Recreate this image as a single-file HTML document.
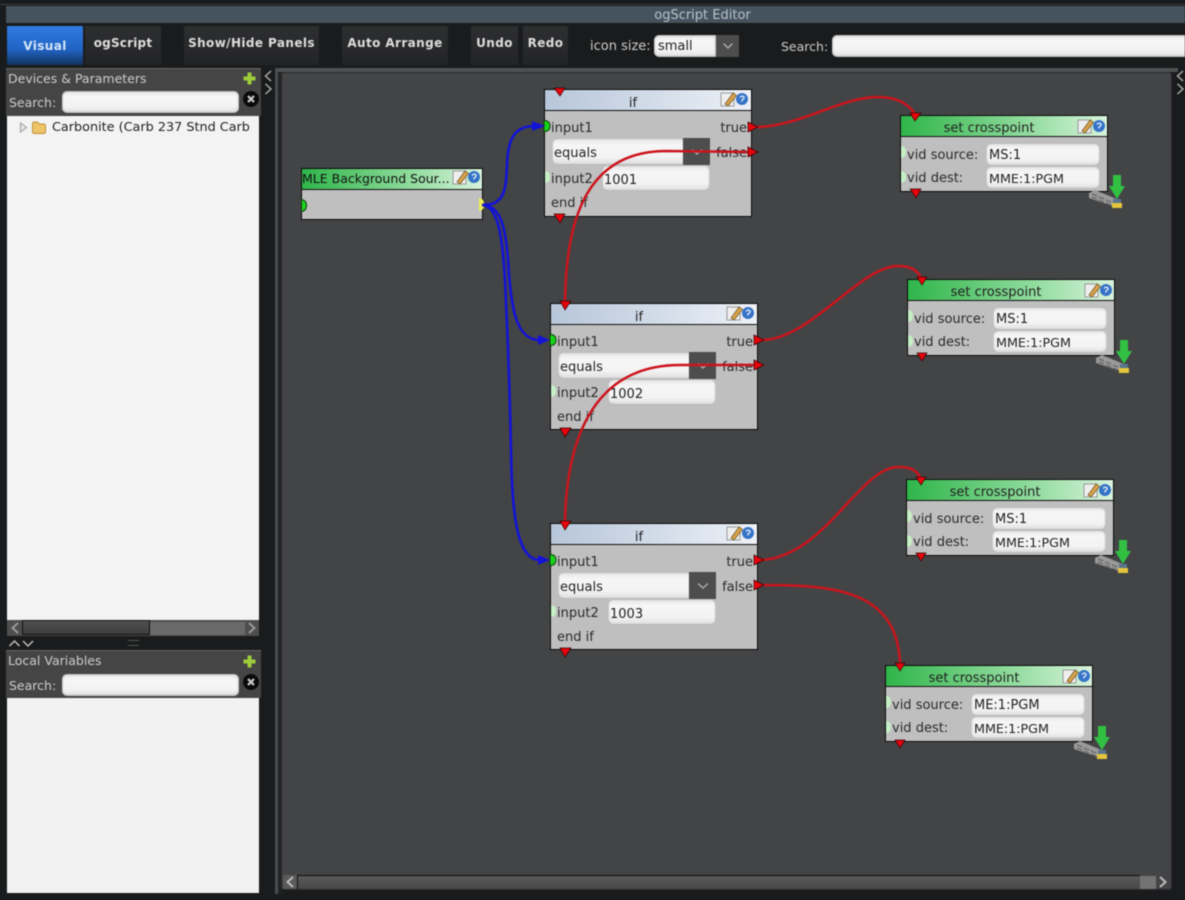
<!DOCTYPE html>
<html><head><meta charset="utf-8"><title>ogScript Editor</title>
<style>
html,body{margin:0;padding:0;background:#1a1b1c;}
#r{position:relative;width:1185px;height:900px;overflow:hidden;background:#1a1b1c;font-family:"DejaVu Sans","Liberation Sans",sans-serif;font-size:13px;color:#222;filter:blur(.45px);}
#r div,#r span{position:absolute;white-space:nowrap;box-sizing:border-box;}
.tb{top:26px;height:39px;background:linear-gradient(#2e2f30,#232425);color:#ddd;font-weight:bold;font-size:12px;text-align:center;line-height:34px;letter-spacing:.4px;}
.lb{color:#ccc;font-size:12.500px;}
.field{background:linear-gradient(#e4e4e4,#f6f6f6 25%,#f3f3f3 70%,#dedede);border-radius:5px;color:#222;line-height:26px;padding-left:2px;box-shadow:inset 0 0 2px #777;}
.node{border:1px solid #0a0a0a;background:#bfbfbf;width:208px;}
.hd{left:0;top:0;right:0;height:21px;border-bottom:1px solid #111;text-align:center;line-height:25px;color:#222;padding-right:30px;}
.if .hd{background:linear-gradient(90deg,#b7c6da,#dce4ee 70%,#eef1f6);line-height:27px;}
.set .hd{background:linear-gradient(90deg,#2fb54a,#8fdb9c 60%,#d8f3dc);}
.t{color:#2a2a2a;}
.led{width:5px;height:12px;background:#c5f0c5;border-radius:0 6px 6px 0;left:0;}
.ico{position:absolute;left:175px;top:1px;}
.set .ico{top:2px;}
.dl{position:absolute;}
.i1{left:6px;top:31px;}
.tr{right:4px;top:31px;}
.sel{left:7px;top:48px;width:132px;height:27px;border-radius:5px 0 0 5px;line-height:31px;padding-left:2px;}
.btn{left:138px;top:48px;width:27px;height:27px;background:#4d4d4d;}
.chev{position:absolute;left:145px;top:58px;}
.fa{right:4px;top:56px;}
.i2{left:6px;top:82px;}
.inp{left:57px;top:75px;width:108px;height:26px;line-height:31px;}
.en{left:6px;top:106px;}
.l1{top:30px;}.l2{top:55px;}
.s1{left:6px;top:32px;}.s2{left:6px;top:55px;}
.f1{left:85px;top:27px;width:114px;height:23px;padding-left:3px;}
.f2{left:85px;top:50px;width:114px;height:23px;padding-left:3px;font-size:12.700px;}
</style></head><body>
<svg width="0" height="0" style="position:absolute">
<defs>
<symbol id="pe" viewBox="0 0 30 18"><rect x="1" y="2" width="13" height="13" fill="#eee" stroke="#999"/><path d="M5 13L13 2L16.500 4.500L8 15Z" fill="#d6a24a" stroke="#6e5326" stroke-width=".7"/><circle cx="22" cy="8" r="6" fill="#3573c8"/><path d="M20 6.500Q22 4 24 6Q24.500 7.500 22 9V10.500" fill="none" stroke="#e8f0fa" stroke-width="1.300"/></symbol>
<symbol id="dn" viewBox="0 0 36 36"><path d="M0 19L6 16L30 26V34L0 24Z" fill="#9a9a9a"/><path d="M3 20L8 22M10 23L15 25M17 26L22 28M3 23L8 25M10 26L15 28M17 29L22 31" stroke="#6a6a6a" stroke-width="1.400"/><path d="M24 1H32V12H36L28 25L20 12H24Z" fill="#32c043"/><rect x="24" y="25" width="8" height="4" fill="#5a7590"/><rect x="23" y="29" width="10" height="5" fill="#e4c53c"/></symbol>
</defs></svg>
<div id="r">
<div style="left:0;top:4px;width:1185px;height:1px;background:#3c3f41"></div>
<div style="left:6px;top:6px;width:1179px;height:17px;background:#44535e;color:#b9c4cb;text-align:center;line-height:20px;font-size:13px;padding-left:214px;">ogScript Editor</div>

<div class="tb" style="left:7px;width:76px;background:linear-gradient(#2f7be0,#2064c4 60%,#12325f);color:#d6e6f8;line-height:40px;">Visual</div>
<div class="tb" style="left:85px;width:76px;letter-spacing:.2px;">ogScript</div>
<div class="tb" style="left:184px;width:135px;">Show/Hide Panels</div>
<div class="tb" style="left:342px;width:106px;">Auto Arrange</div>
<div class="tb" style="left:471px;width:47px;">Undo</div>
<div class="tb" style="left:523px;width:45px;">Redo</div>
<div class="lb" style="left:590px;top:39px;font-size:13px;">icon size:</div>
<div class="field" style="left:654px;top:35px;width:62px;height:22px;border-radius:5px 0 0 5px;padding-left:4px;line-height:24px;">small</div>
<div style="left:716px;top:35px;width:23px;height:22px;background:#4d4d4d;"></div>
<svg style="position:absolute;left:722px;top:42px" width="12" height="8"><path d="M1.500 1.500L6 6L10.500 1.500" fill="none" stroke="#aaa" stroke-width="1.500"/></svg>
<div class="lb" style="left:781px;top:39px;">Search:</div>
<div class="field" style="left:832px;top:35px;width:360px;height:22px;"></div>

<div style="left:6px;top:68px;width:255px;height:48px;background:#454545;border-top:1px solid #666;"></div>
<div class="lb" style="left:8px;top:71px;">Devices &amp; Parameters</div>
<svg style="position:absolute;left:243px;top:72px" width="13" height="13"><path d="M6.500 0.500V12.500M0.500 6.500H12.500" stroke="#9ecb3a" stroke-width="4"/></svg>
<div class="lb" style="left:9px;top:95px;">Search:</div>
<div class="field" style="left:62px;top:91px;width:177px;height:22px;"></div>
<svg style="position:absolute;left:243px;top:91px" width="16" height="16"><circle cx="8" cy="8" r="8" fill="#0a0a0a"/><path d="M5 5L11 11M11 5L5 11" stroke="#ccc" stroke-width="2.200"/></svg>
<div style="left:7px;top:116px;width:252px;height:504px;background:#f3f3f3;"></div>
<svg style="position:absolute;left:19px;top:122px" width="10" height="11"><path d="M1.500 1L7.500 5.500L1.500 10Z" fill="#e8e8e8" stroke="#999"/></svg>
<svg style="position:absolute;left:32px;top:121px" width="14" height="13"><path d="M0.500 3Q0.500 1 2.500 1H5.500L7 3H11.500Q13.500 3 13.500 5V10.500Q13.500 12.500 11.500 12.500H2.500Q0.500 12.500 0.500 10.500Z" fill="#eec467" stroke="#c2903a"/></svg>
<div style="left:52px;top:120px;color:#222;font-size:12.800px;">Carbonite (Carb 237 Stnd Carb</div>

<div style="left:7px;top:620px;width:252px;height:16px;background:#4e4e4e;"></div>
<div style="left:22px;top:620px;width:128px;height:15px;background:linear-gradient(#505050,#3d3d3d);border:1px solid #111;"></div>
<div style="left:150px;top:622px;width:95px;height:13px;background:#6a6a6a;"></div>
<svg style="position:absolute;left:10px;top:622px" width="10" height="12"><path d="M8 1L2.500 6L8 11" fill="none" stroke="#999" stroke-width="2"/></svg>
<svg style="position:absolute;left:247px;top:622px" width="10" height="12"><path d="M2 1L7.500 6L2 11" fill="none" stroke="#999" stroke-width="2"/></svg>
<svg style="position:absolute;left:8px;top:639px" width="26" height="9"><path d="M1.500 7L6.500 2L11.500 7M15 2L20 7L25 2" fill="none" stroke="#bbb" stroke-width="1.500"/></svg>
<div style="left:128px;top:640px;width:11px;height:6px;border-top:1px solid #555;border-bottom:1px solid #555;"></div>

<div style="left:6px;top:650px;width:255px;height:48px;background:#454545;border-top:1px solid #666;"></div>
<div class="lb" style="left:8px;top:653px;">Local Variables</div>
<svg style="position:absolute;left:243px;top:655px" width="13" height="13"><path d="M6.500 0.500V12.500M0.500 6.500H12.500" stroke="#9ecb3a" stroke-width="4"/></svg>
<div class="lb" style="left:9px;top:678px;">Search:</div>
<div class="field" style="left:62px;top:674px;width:177px;height:22px;"></div>
<svg style="position:absolute;left:243px;top:674px" width="16" height="16"><circle cx="8" cy="8" r="8" fill="#0a0a0a"/><path d="M5 5L11 11M11 5L5 11" stroke="#ccc" stroke-width="2.200"/></svg>
<div style="left:7px;top:698px;width:252px;height:195px;background:#f2f2f2;"></div>

<svg style="position:absolute;left:263px;top:69px" width="10" height="26"><path d="M8 2L2.500 7L8 12M2.500 15L8 20L2.500 25" fill="none" stroke="#aaa" stroke-width="1.500"/></svg>
<svg style="position:absolute;left:1175px;top:69px" width="10" height="26"><path d="M8 2L2.500 7L8 12M2.500 15L8 20L2.500 25" fill="none" stroke="#aaa" stroke-width="1.500"/></svg>

<div style="left:275px;top:68px;width:903px;height:4px;background:#505152;"></div>
<div style="left:275px;top:68px;width:3px;height:826px;background:#4a4b4c;"></div>
<div style="left:278px;top:72px;width:3px;height:822px;background:#232425;"></div>
<div style="left:281px;top:72px;width:891px;height:818px;background:#434446;border:1px solid #2a2a2a;border-radius:3px;"></div>

<div style="left:283px;top:875px;width:14px;height:14px;background:#5a5a5a;"></div>
<svg style="position:absolute;left:285px;top:876px" width="10" height="12"><path d="M8 1L2.500 6L8 11" fill="none" stroke="#bbb" stroke-width="2"/></svg>
<div style="left:297px;top:875px;width:843px;height:14px;background:linear-gradient(#595959,#484848);border-top:1px solid #0d0d0d;border-left:1px solid #111;"></div>
<div style="left:1140px;top:876px;width:16px;height:13px;background:#737373;"></div>
<svg style="position:absolute;left:1158px;top:876px" width="10" height="12"><path d="M2 1L7.500 6L2 11" fill="none" stroke="#bbb" stroke-width="2"/></svg>

<!-- MLE node -->
<div class="node set" style="left:301px;top:168px;width:182px;height:52px;">
  <div class="hd" style="text-align:left;padding:0;color:#111;line-height:20px;font-size:12.500px;">MLE Background Sour...</div>
  <svg class="ico" style="left:150px;top:0" width="30" height="18"><use href="#pe"/></svg>
  <div style="left:-1px;top:30px;width:6px;height:13px;background:#1fd41f;border:1px solid #0d420d;border-radius:0 7px 7px 0;"></div>
  <div style="right:-2px;top:29px;width:5px;height:13px;background:#efef55;border-radius:0 6px 6px 0;"></div>
</div>

<!-- if 1 -->
<div class="node if" style="left:544px;top:89px;height:128px;">
  <div class="hd">if</div>
  <svg class="ico" width="30" height="18"><use href="#pe"/></svg>
  <div class="t i1">input1</div>
  <div class="t tr">true</div>
  <div class="field sel">equals</div>
  <div class="btn"></div>
  <svg class="chev" width="14" height="8"><path d="M2 1.500L7 6L12 1.500" fill="none" stroke="#aaa" stroke-width="1.500"/></svg>
  <div class="t fa">false</div>
  <div class="led" style="top:81px;"></div>
  <div class="t i2">input2</div>
  <div class="field inp">1001</div>
  <div class="t en">end if</div>
</div>

<!-- if 2 -->
<div class="node if" style="left:550px;top:303px;height:127px;">
  <div class="hd">if</div>
  <svg class="ico" width="30" height="18"><use href="#pe"/></svg>
  <div class="t i1">input1</div>
  <div class="t tr">true</div>
  <div class="field sel">equals</div>
  <div class="btn"></div>
  <svg class="chev" width="14" height="8"><path d="M2 1.500L7 6L12 1.500" fill="none" stroke="#aaa" stroke-width="1.500"/></svg>
  <div class="t fa">false</div>
  <div class="led" style="top:81px;"></div>
  <div class="t i2">input2</div>
  <div class="field inp">1002</div>
  <div class="t en">end if</div>
</div>

<!-- if 3 -->
<div class="node if" style="left:550px;top:523px;height:127px;">
  <div class="hd">if</div>
  <svg class="ico" width="30" height="18"><use href="#pe"/></svg>
  <div class="t i1">input1</div>
  <div class="t tr">true</div>
  <div class="field sel">equals</div>
  <div class="btn"></div>
  <svg class="chev" width="14" height="8"><path d="M2 1.500L7 6L12 1.500" fill="none" stroke="#aaa" stroke-width="1.500"/></svg>
  <div class="t fa">false</div>
  <div class="led" style="top:81px;"></div>
  <div class="t i2">input2</div>
  <div class="field inp">1003</div>
  <div class="t en">end if</div>
</div>

<!-- set crosspoint 1 -->
<div class="node set" style="left:900px;top:115px;height:77px;">
  <div class="hd">set crosspoint</div>
  <svg class="ico" style="left:176px" width="30" height="18"><use href="#pe"/></svg>
  <div class="led l1"></div><div class="t s1">vid source:</div>
  <div class="field f1">MS:1</div>
  <div class="led l2"></div><div class="t s2">vid dest:</div>
  <div class="field f2">MME:1:PGM</div>
</div>
<svg class="dl" style="left:1089px;top:174px" width="36" height="36"><use href="#dn"/></svg>

<!-- set crosspoint 2 -->
<div class="node set" style="left:907px;top:279px;height:77px;">
  <div class="hd">set crosspoint</div>
  <svg class="ico" style="left:176px" width="30" height="18"><use href="#pe"/></svg>
  <div class="led l1"></div><div class="t s1">vid source:</div>
  <div class="field f1">MS:1</div>
  <div class="led l2"></div><div class="t s2">vid dest:</div>
  <div class="field f2">MME:1:PGM</div>
</div>
<svg class="dl" style="left:1096px;top:339px" width="36" height="36"><use href="#dn"/></svg>

<!-- set crosspoint 3 -->
<div class="node set" style="left:906px;top:479px;height:77px;">
  <div class="hd">set crosspoint</div>
  <svg class="ico" style="left:176px" width="30" height="18"><use href="#pe"/></svg>
  <div class="led l1"></div><div class="t s1">vid source:</div>
  <div class="field f1">MS:1</div>
  <div class="led l2"></div><div class="t s2">vid dest:</div>
  <div class="field f2">MME:1:PGM</div>
</div>
<svg class="dl" style="left:1095px;top:539px" width="36" height="36"><use href="#dn"/></svg>

<!-- set crosspoint 4 -->
<div class="node set" style="left:885px;top:665px;height:77px;">
  <div class="hd">set crosspoint</div>
  <svg class="ico" style="left:176px" width="30" height="18"><use href="#pe"/></svg>
  <div class="led l1"></div><div class="t s1">vid source:</div>
  <div class="field f1">ME:1:PGM</div>
  <div class="led l2"></div><div class="t s2">vid dest:</div>
  <div class="field f2">MME:1:PGM</div>
</div>
<svg class="dl" style="left:1074px;top:725px" width="36" height="36"><use href="#dn"/></svg>

<!-- wires -->
<svg style="position:absolute;left:0;top:0" width="1185" height="900" viewBox="0 0 1185 900">
  <g fill="#18d418" stroke="#0a3d0a" stroke-width="1">
    <path d="M544 120.500Q550 120.500 550 126Q550 131.500 544 131.500Z"/>
    <path d="M550 334.500Q556 334.500 556 340Q556 345.500 550 345.500Z"/>
    <path d="M550 554.500Q556 554.500 556 560Q556 565.500 550 565.500Z"/>
  </g>
  <g fill="none" stroke="#1313d8" stroke-width="2.600">
    <path d="M482 205C504 205 506 192 507 165C508 136 516 126 535 126"/>
    <path d="M482 205C498 205 505 220 508 260C511 310 516 340 540 340"/>
    <path d="M482 205C495 205 502 225 505 280C508 340 510 400 511 450C512 520 518 560 540 560"/>
  </g>
  <g fill="#1313d8">
    <path d="M532 121L545 126L532 131Z"/><path d="M538 335L550 340L538 345Z"/><path d="M538 555L550 560L538 565Z"/>
  </g>
  <g fill="none" stroke="#cc141c" stroke-width="2.500">
    <path d="M755 127C800 127 840 97 878 97C898 97 909 105 915 114"/>
    <path d="M565 304C566 235 578 152 665 151L752 152"/>
    <path d="M762 340C810 340 860 266 898 266C911 266 918 270 922 280"/>
    <path d="M565 524C566 445 590 365 680 365L758 365"/>
    <path d="M762 560C825 556 860 467 898 467C911 467 917 470 921 479"/>
    <path d="M762 585C835 585 900 590 900 668"/>
  </g>
  <g fill="#e8040c" stroke="#300" stroke-width=".7">
    <path d="M554 88H565L560 96Z"/><path d="M554 214H565L560 223Z"/>
    <path d="M560 301H571L565 310Z"/><path d="M560 428H571L565 437Z"/>
    <path d="M560 521H571L565 530Z"/><path d="M560 648H571L565 657Z"/>
    <path d="M748 122L758 127L748 132Z"/><path d="M748 147L758 152L748 157Z"/>
    <path d="M754 335L764 340L754 345Z"/><path d="M754 360L764 365L754 370Z"/>
    <path d="M754 555L764 560L754 565Z"/><path d="M754 580L764 585L754 590Z"/>
    <path d="M910 113H921L915 121Z"/><path d="M910 189H921L916 198Z"/>
    <path d="M917 277H927L922 285Z"/><path d="M917 353H927L922 361Z"/>
    <path d="M916 477H926L921 485Z"/><path d="M916 553H926L921 561Z"/>
    <path d="M895 663H905L900 671Z"/><path d="M895 740H905L900 748Z"/>
  </g>
</svg>
</div>
</body></html>
